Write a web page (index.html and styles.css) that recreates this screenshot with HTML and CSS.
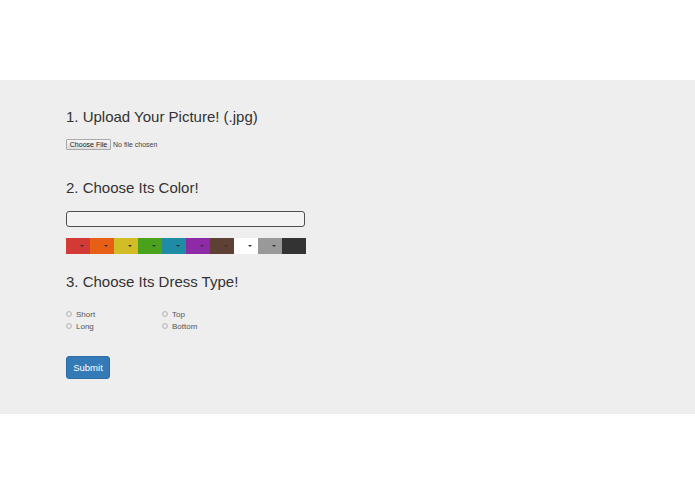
FILE: index.html
```html
<!DOCTYPE html>
<html lang="en">
  <head>
    <meta charset="UTF-8" />
    <meta name="viewport" content="width=device-width, initial-scale=1.0" />
    <title>Dress Finder</title>
    <link rel="stylesheet" href="styles.css">
  </head>
  <body>
    <div class="top"></div>

    <div class="jumbotron">
      <h3 class="step">1. Upload Your Picture! (.jpg)</h3>
      <div class="file">
        <span class="file-btn">Choose File</span>
        <span class="file-name">No file chosen</span>
      </div>

      <h3 class="step step-color">2. Choose Its Color!</h3>
      <div class="color-input"></div>
      <div class="swatches">
        <span class="swatch red"><i class="caret"></i></span>
        <span class="swatch orange"><i class="caret"></i></span>
        <span class="swatch yellow"><i class="caret"></i></span>
        <span class="swatch green"><i class="caret"></i></span>
        <span class="swatch teal"><i class="caret"></i></span>
        <span class="swatch purple"><i class="caret"></i></span>
        <span class="swatch brown"><i class="caret"></i></span>
        <span class="swatch white"><i class="caret"></i></span>
        <span class="swatch grey"><i class="caret"></i></span>
        <span class="swatch black"><i class="caret"></i></span>
      </div>

      <h3 class="step step-type">3. Choose Its Dress Type!</h3>
      <div class="types">
        <label class="radio"><span class="dot"></span>Short</label>
        <label class="radio"><span class="dot"></span>Top</label>
        <label class="radio"><span class="dot"></span>Long</label>
        <label class="radio"><span class="dot"></span>Bottom</label>
      </div>

      <button class="submit">Submit</button>
    </div>
  </body>
</html>
```

FILE: styles.css
```css
body {
  margin: 0;
  font-family: "Liberation Sans", Arial, sans-serif;
  color: #333;
  background: #fff;
}
.top {
  height: 80px;
}
.jumbotron {
  background-color: #eeeeee;
  height: 334px;
  box-sizing: border-box;
  padding: 28px 0 0 66px;
}
.step {
  margin: 0;
  font-size: 15px;
  line-height: 18px;
  font-weight: normal;
}
.file {
  display: flex;
  align-items: center;
  margin-top: 13px;
  height: 11px;
}
.file-btn {
  box-sizing: border-box;
  width: 45px;
  height: 11px;
  border: 1px solid #a9a9a9;
  border-radius: 1px;
  background: linear-gradient(#f6f6f6, #dedede);
  font-size: 7px;
  line-height: 9px;
  text-align: center;
  color: #222;
}
.file-name {
  margin-left: 2px;
  font-size: 7px;
  color: #444;
}
.step-color {
  margin-top: 29px;
}
.color-input {
  box-sizing: border-box;
  width: 239px;
  height: 16px;
  margin-top: 14px;
  border: 1.5px solid #505050;
  border-radius: 3px;
  background: #f3f3f3;
}
.swatches {
  display: flex;
  margin-top: 11px;
}
.swatch {
  position: relative;
  width: 24px;
  height: 16px;
}
.caret {
  position: absolute;
  left: 14px;
  top: 7px;
  border-left: 2px solid transparent;
  border-right: 2px solid transparent;
  border-top: 2px solid #333;
}
.red { background: #d33a35; }
.orange { background: #e75f14; }
.yellow { background: #d3bd27; }
.green { background: #4aa21c; }
.teal { background: #1f8ba4; }
.purple { background: #8f2aa6; }
.brown { background: #5f4035; }
.white { background: #ffffff; }
.grey { background: #999999; }
.black { background: #333333; }
.step-type {
  margin-top: 19px;
}
.types {
  display: grid;
  grid-template-columns: 96px 96px;
  row-gap: 2px;
  margin-top: 18px;
}
.radio {
  display: flex;
  align-items: center;
  height: 10px;
  font-size: 8px;
  color: #555;
}
.dot {
  box-sizing: border-box;
  width: 6px;
  height: 6px;
  margin-right: 4px;
  border: 1px solid #b5b5b5;
  border-radius: 50%;
  background: #eaeaea;
}
.submit {
  display: block;
  margin-top: 25px;
  width: 44px;
  height: 23px;
  padding: 0;
  border: 1px solid #2e6da4;
  border-radius: 3px;
  background: #337ab7;
  color: #fff;
  font-family: "Liberation Sans", Arial, sans-serif;
  font-size: 9.5px;
  font-weight: normal;
}
```
